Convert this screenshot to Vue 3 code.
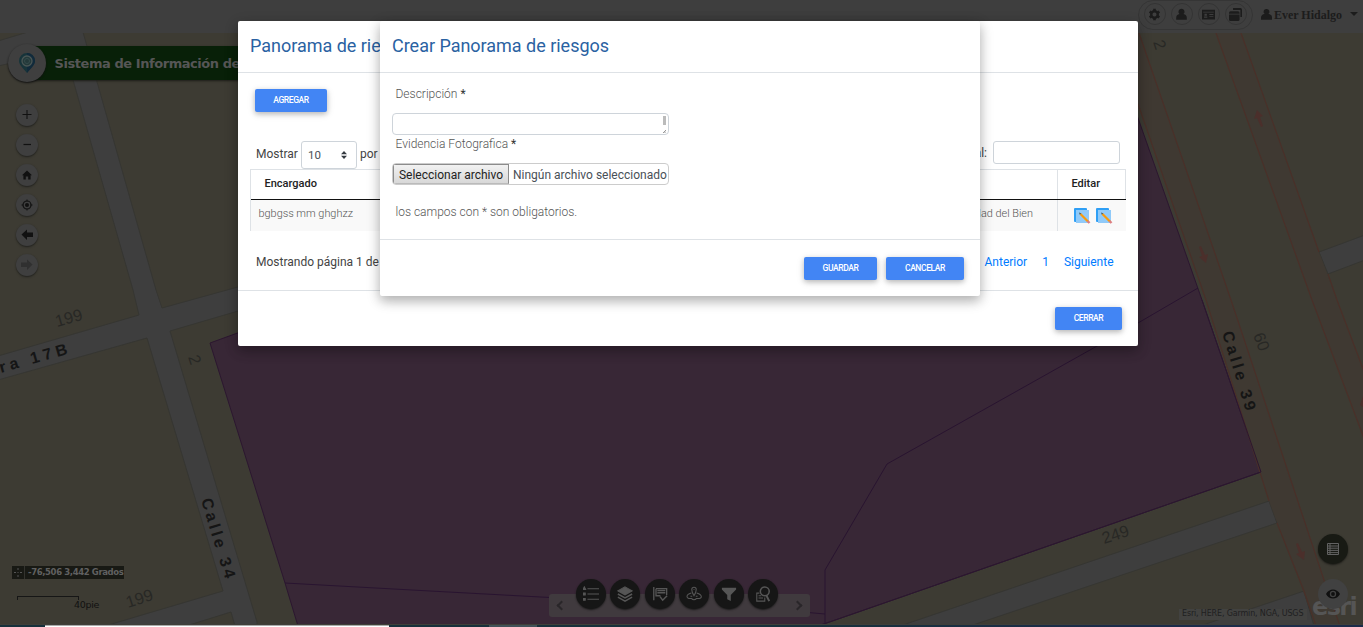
<script setup>
const zoomTools = ['plus', 'minus', 'home', 'locate', 'back', 'forward']
const headerTools = ['gear', 'user', 'card', 'copy']
const dockTools = ['legend', 'layers', 'edit', 'route', 'filter', 'search']
const pages = ['Anterior', '1', 'Siguiente']
</script>

<template>
  <div class="viewer">
    <header class="topbar">
      <div class="pill">
        <span v-for="t in headerTools" :key="t" class="round">
          <svg viewBox="0 0 16 16" width="13" height="13">
            <template v-if="t === 'gear'">
              <circle cx="8" cy="8" r="4" fill="none" stroke="currentColor" stroke-width="3" />
              <path d="M8 1v3M8 12v3M2 4.500l2.500 1.500M11.500 10l2.500 1.500M2 11.500l2.500-1.500M11.500 6l2.500-1.500" stroke="currentColor" stroke-width="3.200" />
            </template>
            <path v-else-if="t === 'user'" d="M8 1a3.700 3.700 0 0 1 2.500 6.500C13 8 14.500 9.500 14.500 12v2.500h-13V12c0-2.500 1.500-4 4-4.500A3.700 3.700 0 0 1 8 1z" fill="currentColor" />
            <path v-else-if="t === 'card'" fill-rule="evenodd" d="M0 2h16v12H0zM1.500 4.500v1h13v-1zM3 7h3v2.500H3zM2.500 10.500h4V12h-4zM9 7.500h5v1H9zM9 10h5v1H9z" fill="currentColor" />
            <path v-else d="M5 0h9a2 2 0 0 1 2 2v9h-2V2.500H5zM2 4h9a2 2 0 0 1 2 2v1H0V6a2 2 0 0 1 2-2zM0 8h13v6a2 2 0 0 1-2 2H2a2 2 0 0 1-2-2z" fill="currentColor" />
          </svg>
        </span>
      </div>
      <svg class="avatar" viewBox="0 0 16 16" width="11" height="13"><path d="M8 0a4 4 0 0 1 2.700 7.200C14 7.500 16 9.500 16 12.500V15.500H0v-3C0 9.500 2 7.500 5.300 7.200A4 4 0 0 1 8 0z" fill="currentColor" /></svg>
      <b class="account">Ever Hidalgo</b>
      <i class="caret"></i>
    </header>

    <main class="mapArea">
      <svg class="map" viewBox="0 33 1363 591" width="1363" height="591">
        <rect y="33" width="1363" height="591" fill="#3d3b33" />
        <g fill="#3e3e3e" stroke="#363632" stroke-width="1">
          <path d="M-2 41L28 32H83L88 50L156 290L162 308L245 285V309L170 331L257 622V626H235L231 612L186 626H105L223 591L147 338L-2 380V356L139 315L133 290L73 80L62 52L-2 66z" />
          <path d="M900 626L1269 501L1277 523L970 626z" />
          <path d="M1200 626L1304 591L1314 626z" />
          <path d="M1319 252L1365 235V260L1328 274z" />
        </g>
        <path d="M210 343L1100 20L1138 118L1202 300L1261 472L818 626H298L285 583z" fill="#382736" stroke="#2c1730" stroke-width="1" />
        <path d="M1100 33H1139L1231 300L1325 583L1340 626H1316L1269 501L1206 300L1138 104z M1216 33H1241L1319 252L1337 300L1365 374V441L1312 300z" fill="#3f3932" />
        <path d="M1139 33L1231 300L1325 583L1340 626M1138 104L1206 300L1269 501M1277 523L1304 591L1316 626M1216 33L1312 300L1365 441M1241 33L1319 252M1328 274L1337 300L1365 374" fill="none" stroke="#4a3029" stroke-width="1.200" />
        <path d="M285 583L430 591L780 610L825 614M825 626V570L887 464L1138 323L1198 288" fill="none" stroke="#291430" />
        <path d="M1202 300L1261 472L818 626" fill="none" stroke="#2c1730" />
        <g fill="#4b2f2b">
          <path d="M1257 110l-3 9 3-1 4 9 2-1-3-9 3-1z" />
          <path d="M1206 263l2-9-3 1-4-9-2 1 3 9-3 1z" />
          <path d="M1304 560l1-9-3 1-4-9-2 1 3 9-3 1z" />
          <path d="M1363 396l-3 9 3 2z" />
        </g>
        <g class="num">
          <text transform="translate(57 327) rotate(-16)">199</text>
          <text transform="translate(128 608) rotate(-18)">199</text>
          <text transform="translate(188 357) rotate(72)">2</text>
          <text transform="translate(1153 42) rotate(72)">2</text>
          <text transform="translate(1253 335) rotate(70)">60</text>
          <text transform="translate(1104 544) rotate(-18)">249</text>
        </g>
        <g class="street">
          <text transform="translate(1 373) rotate(-16)" textLength="70">ra 17B</text>
          <text transform="translate(201 500) rotate(73)" textLength="83">Calle 34</text>
          <text transform="translate(1222 333) rotate(73)" textLength="82">Calle 39</text>
        </g>
      </svg>

      <div class="brand">
        <span class="logo"><svg viewBox="0 0 16 20" width="16" height="20"><path d="M8 0a8 8 0 0 1 8 8c0 4-5 8-8 12C5 16 0 12 0 8a8 8 0 0 1 8-8z" fill="#17343a" /><path d="M8 0a8 8 0 0 1 8 8c0 4-5 8-8 12z" fill="#112a3b" /><circle cx="8" cy="8" r="5" fill="#24393a" stroke="#4a5655" stroke-width="1.300" /><circle cx="8" cy="8" r="2.500" fill="none" stroke="#344b4b" /></svg></span>
        <b>Sistema de Información de</b>
      </div>

      <nav class="mapTools">
        <span v-for="t in zoomTools" :key="t" :class="['tool', t]">
          <svg viewBox="0 0 14 14" width="14" height="14">
            <path v-if="t === 'plus'" d="M7 2v9M2.500 6.500h9" stroke="currentColor" stroke-width="1.100" />
            <path v-else-if="t === 'minus'" d="M3.500 6.500h7.500" stroke="currentColor" stroke-width="1.200" />
            <path v-else-if="t === 'home'" d="M7 2.500l5 4.700h-1.400v4.300H8.200V8.500H5.800v3H3.400V7.200H2z" fill="currentColor" />
            <g v-else-if="t === 'locate'"><circle cx="7" cy="7" r="4" fill="none" stroke="currentColor" stroke-width="1.200" /><circle cx="7" cy="7" r="2" fill="currentColor" /><path d="M7 1.500v2M7 10.500v2M1.500 7h2M10.500 7h2" stroke="currentColor" /></g>
            <path v-else-if="t === 'back'" d="M1.500 6.500l5.500-5v3h6v4.500H7v3z" fill="currentColor" />
            <path v-else d="M12.500 6.500L7 1.500v3H1v4.500h6v3z" fill="currentColor" />
          </svg>
        </span>
      </nav>

      <div class="coords"><svg width="12" height="13" viewBox="0 0 12 13"><path d="M6 2v2M6 9v2M2 6.500h2M8 6.500h2M5.500 6.500h1" stroke="#555" /></svg><b>-76,506 3,442 Grados</b></div>
      <div class="scale"><i></i><span>40pie</span></div>

      <div class="dock">
        <div class="dockBar"><i class="prev"></i><i class="next"></i></div>
        <div class="dockTools">
          <span v-for="t in dockTools" :key="t" class="dockTool">
            <svg viewBox="0 0 18 18" width="16" height="16" fill="none" stroke="currentColor" stroke-width="1.200">
              <template v-if="t === 'legend'"><path d="M5 3h13M5 9h13M5 15h13" /><path d="M0 4l1.500-3L3 4zM.5 8h2v2h-2zM.5 14h2v2h-2z" fill="currentColor" /></template>
              <template v-else-if="t === 'layers'"><path d="M9 1l8 4.500L9 10 1 5.500z" fill="currentColor" /><path d="M1 9l8 4.500L17 9M1 12.500L9 17l8-4.500" stroke-width="1.700" /></template>
              <template v-else-if="t === 'edit'"><path d="M2 1v15M4.500 3h12v7M4.500 3v8h5" stroke-width="1.500" /><path d="M6 5h9M6 7.500h9M9 12l3 4 5-5" stroke-width="1.700" /></template>
              <template v-else-if="t === 'route'"><path d="M9 11C7 8 6.500 6 6.500 4a2.500 2.500 0 0 1 5 0c0 2-.5 4-2.500 7zM6 8c-7 2-6 7 0 6 2 2 4 2 6 0 7 1 7-4 0-6" /><path d="M5 11.500h2M11 11.500h2M8.500 4h1" /></template>
              <path v-else-if="t === 'filter'" d="M1 2h16v2l-6 6v7l-4-2v-5L1 4z" fill="currentColor" stroke="none" />
              <template v-else><circle cx="11" cy="6" r="5" stroke-width="1.700" /><path d="M13 11l3 6" stroke-width="2.200" /><path d="M5 8H2v9h9v-4M4 11h3M4 13.500h5" /></template>
            </svg>
          </span>
        </div>
      </div>

      <span class="attribution">Esri, HERE, Garmin, NGA, USGS</span>
      <b class="esri">esri</b>
      <div class="sideTools">
        <span class="fab"><svg viewBox="0 0 12 12" width="12" height="12"><path d="M.5.5h11v11H.5zM0 3h12M0 5.200h12M0 7.400h12M0 9.600h12M3 0v12" fill="none" stroke="#626262" /></svg></span>
        <span class="fab light"><svg viewBox="0 0 14 10" width="14" height="10"><path fill-rule="evenodd" d="M0 5C3-1 11-1 14 5 11 11 3 11 0 5zM7 1.800a3.200 3.200 0 1 0 0 6.400 3.200 3.200 0 0 0 0-6.400z" fill="#101010" /><circle cx="7" cy="5" r="1.900" fill="#101010" /></svg></span>
      </div>
    </main>

    <footer class="taskbar"><i class="active"></i><i class="idle"></i></footer>

    <section class="dialog list">
      <h2>Panorama de riesgos</h2>
      <div class="listBody">
        <button class="btn add">AGREGAR</button>
        <div class="controls">
          <span class="show">Mostrar</span>
          <span class="select">10<svg width="6" height="8" viewBox="0 0 6 8"><path d="M3 0l3 3.300H0zM3 8l3-3.300H0z" fill="#343a40" /></svg></span>
          <span class="show">por página</span>
          <span class="filterLabel">Filtro general:</span>
          <input class="filter" type="text" />
        </div>
        <div class="grid">
          <div class="cells head"><b>Encargado</b><b></b><b>Editar</b></div>
          <div class="cells row">
            <span>bgbgss mm ghghzz</span><span class="asset">Seguridad del Bien</span>
            <span class="icons"><svg v-for="n in 2" :key="n" width="18" height="18" viewBox="0 0 18 18"><path d="M2 1h11a1 1 0 0 1 1 1v2H4v11H2a1 1 0 0 1-1-1V2a1 1 0 0 1 1-1z" fill="#2f9ff5" /><path d="M3 3h13v13H3z" fill="#90caf9" /><path d="M7.500 7l7.500 7.500" stroke="#f99a0c" stroke-width="2.200" /><path d="M6 5.500l2.300.8-1.500 1.500z" fill="#4d5a55" /><path d="M14.500 14l2 2" stroke="#dd7d80" stroke-width="2.400" /></svg></span>
          </div>
        </div>
        <div class="pager"><span>Mostrando página 1 de 1</span><nav><a v-for="p in pages" :key="p">{{ p }}</a></nav></div>
      </div>
      <div class="actions"><button class="btn close">CERRAR</button></div>
    </section>

    <section class="dialog create">
      <h2>Crear Panorama de riesgos</h2>
      <div class="form">
        <label>Descripción <em>*</em></label>
        <div class="textarea"><i class="thumb"></i><svg width="3" height="3" viewBox="0 0 4 4"><path d="M0 4L4 0M2 4l2-2" stroke="#777" /></svg></div>
        <label>Evidencia Fotografica <em>*</em></label>
        <div class="file"><span class="choose">Seleccionar archivo</span><span class="none">Ningún archivo seleccionado</span></div>
        <p>los campos con * son obligatorios.</p>
      </div>
      <div class="actions"><button class="btn save">GUARDAR</button><button class="btn cancel">CANCELAR</button></div>
    </section>
  </div>
</template>

<style>
body { overflow: hidden; background: #3e3e3e; }
</style>

<style scoped>
* { box-sizing: border-box; }
.viewer { position: relative; display: flex; flex-direction: column; width: 1363px; height: 627px; overflow: hidden; font-family: Roboto, sans-serif; font-size: 12px; }
.topbar { flex: 0 0 33px; display: flex; justify-content: flex-end; align-items: flex-start; padding-right: 5px; background: #3e3e3e; color: #1c1c1c; }
.pill { display: flex; gap: 5px; padding: 2px 5px 3px 5px; height: 30px; border: 1px solid #353535; border-radius: 15px; margin: 0 8px 0 0; }
.round { display: flex; align-items: center; justify-content: center; width: 22px; height: 22px; border: 1px solid #343434; border-radius: 50%; }
.avatar { margin-top: 8px; }
.account { margin: 7px 0 0 2px; font: bold 12px/16px "Liberation Serif", serif; }
.caret { margin: 12px 0 0 8px; border: 4px solid transparent; border-top-color: #1c1c1c; border-bottom: 0; width: 0; }
.mapArea { flex: 0 0 591px; position: relative; }
.map { display: block; }
.num { font: 16.500px "Liberation Sans", sans-serif; fill: #282825; }
.street { font: bold 16px "Liberation Sans", sans-serif; fill: #151515; }
.brand { position: absolute; left: 8px; top: 11px; display: flex; align-items: center; width: 380px; height: 38px; }
.brand::before { content: ""; position: absolute; left: 20px; right: 0; top: 2px; height: 34px; background: #082008; box-shadow: 0 1px 2px #1c1c18; }
.logo { position: relative; display: flex; align-items: center; justify-content: center; width: 38px; height: 38px; border-radius: 50%; background: #3f3f3f; box-shadow: 0 1px 2px #111; }
.brand b { position: relative; margin-left: 8.500px; font: bold 13px "DejaVu Sans", sans-serif; color: #565656; letter-spacing: -.44px; }
.mapTools { position: absolute; left: 16px; top: 71px; display: flex; flex-direction: column; gap: 8px; }
.tool { display: flex; align-items: center; justify-content: center; width: 22px; height: 22px; border-radius: 50%; background: #3f3f3f; color: #111; box-shadow: 0 1px 2px #20201d; }
.forward { color: #303030; }
.coords { position: absolute; left: 12px; top: 533px; display: flex; align-items: center; width: 112px; height: 13px; background: #181914; color: #606060; }
.coords b { border-left: 1px solid #33332e; padding-left: 3px; font: bold 8.500px/13px "DejaVu Sans", sans-serif; letter-spacing: -.38px; white-space: nowrap; }
.scale { position: absolute; left: 17px; top: 563px; color: #111; }
.scale i { display: block; width: 62px; height: 4px; border: 1px solid #161616; border-bottom: 0; }
.scale span { margin-left: 57px; font: 9.500px/9px "DejaVu Sans", sans-serif; letter-spacing: -.3px; display: block; }
.dock { position: absolute; left: 549px; top: 546px; width: 261px; height: 52px; display: flex; justify-content: center; padding-right: 5px; }
.dockBar { position: absolute; left: 0; bottom: 14px; bottom: 7px; width: 261px; height: 23px; border-radius: 3px; background: #403a3e; display: flex; justify-content: space-between; align-items: center; padding: 0 9px; }
.dockBar { top: 15px; }
.dockBar i { width: 7px; height: 7px; border: solid #292629; border-width: 2px 0 0 2px; transform: rotate(-45deg); }
.dockBar .next { transform: rotate(135deg); }
.dockTools { position: relative; display: flex; gap: 4.600px; height: 30px; }
.dockTool { display: flex; align-items: center; justify-content: center; width: 30px; height: 30px; border-radius: 50%; background: #161616; color: #565656; box-shadow: 0 1px 2px #191919; }
.attribution { position: absolute; left: 1179px; top: 576px; width: 128px; height: 11px; padding-left: 3px; background: #424240; font: 8px/10px "DejaVu Sans", sans-serif; letter-spacing: -.16px; color: #202020; white-space: nowrap; }
.esri { position: absolute; left: 1312px; top: 560px; font: bold 24px/28px "DejaVu Sans", sans-serif; color: #555; letter-spacing: -1.600px; }
.sideTools { position: absolute; left: 1318px; top: 501px; display: flex; flex-direction: column; gap: 15px; }
.fab { display: flex; align-items: center; justify-content: center; width: 30px; height: 30px; border-radius: 50%; background: #181a14; box-shadow: 0 1px 2px #1c1c18; }
.light { background: #414141; box-shadow: none; }
.taskbar { display: flex; height: 3px; padding: 1px 0 0 45px; background: linear-gradient(90deg, #17303b 0 60%, #1b2b49 82%); border-top: 1px solid #3f3f39; }
.taskbar i { width: 344px; height: 2px; margin-top: -1px; background: #fff; border-top: 1px solid #aaa; }
.taskbar .idle { width: 48px; margin-left: 100px; background: #415158; border: 0; }
.dialog { position: absolute; top: 21px; background: #fff; border-radius: 2px; box-shadow: 0 5px 11px rgba(0,0,0,.2), 0 4px 15px rgba(0,0,0,.16); }
.list { left: 238px; width: 900px; height: 325px; }
.create { left: 380px; width: 600px; height: 275px; }
h2 { margin: 0; height: 52px; padding: 0 12px; border-bottom: 1px solid #dee2e6; font-size: 18px; font-weight: 400; line-height: 50px; color: #2a62a2; letter-spacing: -.02px; }
.btn { height: 23px; padding: 0; border: 0; border-radius: 2px; background: #4285f4; color: #fff; font: 500 8.500px/23px Roboto, sans-serif; letter-spacing: -.4px; box-shadow: 0 2px 5px rgba(0,0,0,.2), 0 2px 8px rgba(0,0,0,.12); }
.listBody { height: 217px; padding: 16px 12px 0; }
.add { display: block; width: 72px; margin-left: 5px; }
.controls { display: flex; align-items: center; height: 27px; margin-top: 29px; padding: 0 6px; color: #444; font-size: 12px; }
.show { margin-top: -1px; letter-spacing: .01px; }
.select { display: flex; align-items: center; justify-content: space-between; width: 56px; height: 28px; margin: 0 3px; padding: 0 9px 0 6px; border: 1px solid #ced4da; border-radius: 3px; color: #495057; font-size: 11.500px; line-height: 24px; }
.filterLabel { margin: -3px 6px 0 auto; }
.filter { width: 127px; height: 23px; margin-top: -4px; border: 1px solid #ced4da; border-radius: 3px; }
.grid { margin-top: 1px; border: 1px solid #dee2e6; border-width: 1px 0 0 1px; }
.cells { display: grid; grid-template-columns: 400px 1fr 69px; }
.head { height: 30px; border-bottom: 1px solid #111; font-size: 11px; line-height: 27px; color: #222; }
.head b { font-weight: 500; padding-left: 13.500px; }
.head b:last-child { border: solid #dee2e6; border-width: 0 1px; }
.row { height: 31px; background: #f9f9f9; font-size: 10.900px; line-height: 27px; color: #555; font-weight: 300; }
.row span { padding-left: 7.500px; }
.row .asset { padding: 0 24px 0 0; text-align: right; }
.row .icons { display: flex; gap: 4px; padding: 7px 0 0 15px; border-left: 1px solid #dee2e6; }
.pager { display: flex; justify-content: space-between; padding: 0 12.500px 0 6px; margin-top: 20px; line-height: 22px; color: #444; }
.pager nav { display: flex; gap: 15px; color: #007bff; }
.actions { display: flex; justify-content: flex-end; gap: 9px; padding: 17px 16px 0; border-top: 1px solid #dee2e6; }
.list .actions { padding-top: 16px; }
.close { width: 67px; }
.save { width: 73px; }
.cancel { width: 78px; }
.form { height: 166px; padding: 12px; font-size: 12px; }
label { display: block; padding-left: 3.500px; line-height: 18px; font-weight: 300; color: #555; }
em { font-style: normal; font-weight: 400; color: #333; }
.textarea { display: flex; flex-direction: column; align-items: flex-end; justify-content: space-between; width: 277px; height: 22px; margin: 10px 0 0; padding: 2px 2px 1px; border: 1px solid #ced4da; border-radius: 4px; }
.thumb { width: 3px; height: 9px; background: #bbb; }
.file { display: flex; width: 277px; height: 22px; margin-top: 10px; border: 1px solid #ccc; border-radius: 4px; font-size: 12px; line-height: 22px; overflow: hidden; white-space: nowrap; }
.choose { flex: none; width: 116px; text-align: center; border: 1px solid #8c8c8c; border-bottom-color: #bbb; background: linear-gradient(#f2f2f2, #d8d8d8); color: #222; line-height: 20px; }
.none { padding-left: 4px; color: #495057; }
p { margin: 18px 0 0 3.500px; line-height: 18px; font-weight: 300; color: #555; }
</style>
